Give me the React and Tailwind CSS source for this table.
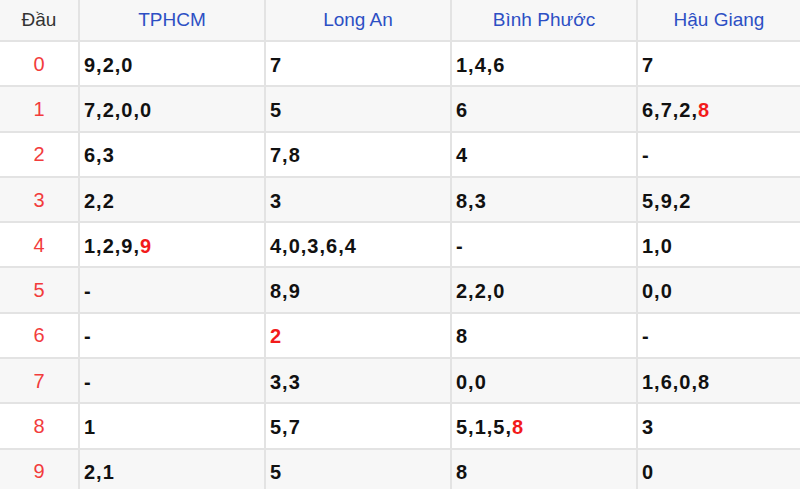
import React from "react";

const regions = ["TPHCM", "Long An", "Bình Phước", "Hậu Giang"];

// "*" prefix marks a red highlighted digit at the end
const rows = [
  ["9,2,0", "7", "1,4,6", "7"],
  ["7,2,0,0", "5", "6", "6,7,2,*8"],
  ["6,3", "7,8", "4", "-"],
  ["2,2", "3", "8,3", "5,9,2"],
  ["1,2,9,*9", "4,0,3,6,4", "-", "1,0"],
  ["-", "8,9", "2,2,0", "0,0"],
  ["-", "*2", "8", "-"],
  ["-", "3,3", "0,0", "1,6,0,8"],
  ["1", "5,7", "5,1,5,*8", "3"],
  ["2,1", "5", "8", "0"],
];

function Value({ v }) {
  const i = v.indexOf("*");
  if (i === -1) return <span>{v}</span>;
  return (
    <span>
      {v.slice(0, i)}
      <span className="text-[#f21b1b]">{v.slice(i + 1)}</span>
    </span>
  );
}

export default function App() {
  return (
    <div
      className="w-[800px] h-[489px] overflow-hidden bg-white"
      style={{ fontFamily: '"Liberation Sans", Arial, sans-serif' }}
    >
      <div className="grid grid-cols-[80px_186px_186px_186px_1fr]">
        <div className="h-[42px] flex items-center justify-center bg-[#f7f7f7] border-r-2 border-b-2 border-[#e3e3e3] text-[19px] text-[#333333]">
          Đầu
        </div>
        {regions.map((r, i) => (
          <div
            key={r}
            className={`h-[42px] flex items-center justify-center bg-[#f7f7f7] border-b-2 border-[#e3e3e3] text-[19px] text-[#2d4fc4] ${
              i < 3 ? "border-r-2" : ""
            }`}
          >
            {r}
          </div>
        ))}
        {rows.map((row, ri) => {
          const bg = ri % 2 === 1 ? "bg-[#f7f7f7]" : "bg-white";
          return (
            <React.Fragment key={ri}>
              <div
                className={`h-[45.3px] flex items-center justify-center border-r-2 border-b-2 border-[#e3e3e3] text-[20px] text-[#f23c3c] ${bg}`}
              >
                {ri}
              </div>
              {row.map((v, ci) => (
                <div
                  key={ci}
                  className={`h-[45.3px] flex items-center pl-[4px] pt-[2px] border-b-2 border-[#e3e3e3] text-[20px] font-bold tracking-[1px] text-[#111111] ${bg} ${
                    ci < 3 ? "border-r-2" : ""
                  }`}
                >
                  <Value v={v} />
                </div>
              ))}
            </React.Fragment>
          );
        })}
      </div>
    </div>
  );
}
